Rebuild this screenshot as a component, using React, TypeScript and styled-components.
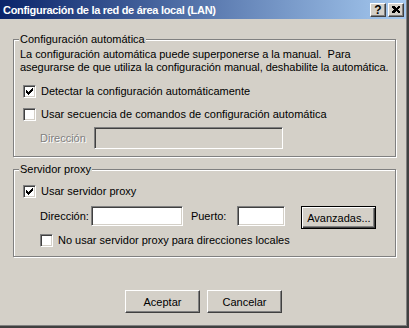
import React from 'react';
import styled, { createGlobalStyle } from 'styled-components';

const Global = createGlobalStyle`
  html, body {
    margin: 0;
    padding: 0;
    background: #d4d0c8;
  }
  body {
    font-family: 'Liberation Sans', Arial, sans-serif;
    font-size: 11px;
    color: #000;
  }
`;

const Window = styled.div`
  width: 409px;
  height: 328px;
  box-sizing: border-box;
  padding: 0 3px 3px 0;
  background: #d4d0c8;
  display: flex;
  flex-direction: column;
  box-shadow: inset -1px -1px #404040, inset -2px -2px #404040, inset -3px -3px #808080;
`;

const TitleBar = styled.div`
  height: 19px;
  flex: none;
  display: flex;
  align-items: center;
  padding: 0 2px 0 3px;
  background: linear-gradient(to right, #0a246a, #a6caf0);
  color: #fff;
  font-weight: bold;
  font-size: 11px;
`;

const Title = styled.span`
  flex: 1;
  white-space: nowrap;
  letter-spacing: -0.3px;
`;

const TitleButtons = styled.div`
  display: flex;
  gap: 2px;
`;

const CaptionButton = styled.span`
  width: 16px;
  height: 14px;
  box-sizing: border-box;
  background: #d4d0c8;
  color: #000;
  border: 1px solid;
  border-color: #fff #404040 #404040 #fff;
  box-shadow: inset -1px -1px #808080;
  display: flex;
  align-items: center;
  justify-content: center;
  font-size: 12px;
  font-weight: bold;
  line-height: 1;
`;

const Group = styled.fieldset<{ $top: number; $bottom: number }>`
  margin: ${p => p.$top}px 0 0 13px;
  width: 383px;
  box-sizing: border-box;
  border: 1px solid #808080;
  box-shadow: inset 1px 1px #fff, 1px 1px #fff;
  padding: 0 0 ${p => p.$bottom}px 5px;
  min-inline-size: 0;
  display: flex;
  flex-direction: column;
`;

const Legend = styled.legend`
  padding: 0 1px;
  line-height: 13px;
  background: #d4d0c8;
`;

const Note = styled.p`
  margin: 2px 0 0 1px;
  line-height: 13px;
  letter-spacing: -0.05px;
`;

const CheckRow = styled.label<{ $top: number; $indent?: number }>`
  display: flex;
  align-items: center;
  gap: 5px;
  height: 13px;
  line-height: 13px;
  margin: ${p => p.$top}px 0 0 ${p => p.$indent ?? 4}px;
`;

const Box = styled.span`
  width: 13px;
  height: 13px;
  box-sizing: border-box;
  flex: none;
  background: #fff;
  border: 1px solid;
  border-color: #808080 #fff #fff #808080;
  box-shadow: inset 1px 1px #404040, inset -1px -1px #d4d0c8;
  display: flex;
  align-items: center;
  justify-content: center;
`;

const FieldRow = styled.div<{ $top: number }>`
  display: flex;
  align-items: center;
  margin: ${p => p.$top}px 0 0 21px;
`;

const FieldLabel = styled.span<{ $disabled?: boolean; $gap: number }>`
  margin-right: ${p => p.$gap}px;
  line-height: 13px;
  color: ${p => (p.$disabled ? '#808080' : '#000')};
  text-shadow: ${p => (p.$disabled ? '1px 1px #fff' : 'none')};
`;

const Field = styled.input<{ $w: number; $h: number }>`
  width: ${p => p.$w}px;
  height: ${p => p.$h}px;
  box-sizing: border-box;
  margin: 0;
  padding: 0 3px;
  border: 1px solid;
  border-color: #808080 #fff #fff #808080;
  box-shadow: inset 1px 1px #404040, inset -1px -1px #d4d0c8;
  background: #fff;
  font: inherit;
  outline: none;

  &:disabled {
    background: #d4d0c8;
  }
`;

const ProxyRow = styled.div`
  display: flex;
  align-items: flex-start;
  margin: 8px 0 0 21px;
`;

const ProxyLabel = styled.span<{ $gap: number; $lead?: number }>`
  height: 20px;
  display: flex;
  align-items: center;
  margin: 0 ${p => p.$gap}px 0 ${p => p.$lead ?? 0}px;
`;

const Button = styled.button<{ $default?: boolean }>`
  width: 75px;
  height: 23px;
  box-sizing: border-box;
  margin: 0;
  padding: 0;
  background: #d4d0c8;
  color: #000;
  font: inherit;
  border: 1px solid;
  border-color: ${p => (p.$default ? '#000' : '#fff #404040 #404040 #fff')};
  box-shadow: ${p =>
    p.$default
      ? 'inset 1px 1px #fff, inset -1px -1px #404040, inset -2px -2px #808080'
      : 'inset -1px -1px #808080'};
  outline: none;
`;

const Footer = styled.div`
  display: flex;
  justify-content: center;
  gap: 7px;
  margin: 33px 0 0 1px;
`;

const checkPixels: [number, number, number][] = [
  [6, 0, 1],
  [5, 1, 2],
  [0, 2, 1],
  [4, 2, 3],
  [0, 3, 2],
  [3, 3, 3],
  [0, 4, 5],
  [1, 5, 3],
  [2, 6, 1],
];

function Check({ checked }: { checked?: boolean }) {
  return (
    <Box>
      {checked && (
        <svg width="7" height="7" viewBox="0 0 7 7" shapeRendering="crispEdges">
          {checkPixels.map(([x, y, w], i) => (
            <rect key={i} x={x} y={y} width={w} height={1} fill="#000" />
          ))}
        </svg>
      )}
    </Box>
  );
}

function CloseGlyph() {
  return (
    <svg width="8" height="7" viewBox="0 0 8 7" shapeRendering="crispEdges">
      <path d="M0 0h2l2 2 2-2h2v1l-2 2.5 2 2.5v1h-2l-2-2-2 2h-2v-1l2-2.5-2-2.5z" fill="#000" />
    </svg>
  );
}

export default function App() {
  return (
    <Window>
      <Global />
      <TitleBar>
        <Title>Configuración de la red de área local (LAN)</Title>
        <TitleButtons>
          <CaptionButton>?</CaptionButton>
          <CaptionButton>
            <CloseGlyph />
          </CaptionButton>
        </TitleButtons>
      </TitleBar>

      <Group $top={14} $bottom={7}>
        <Legend>Configuración automática</Legend>
        <Note>
          La configuración automática puede superponerse a la manual.&nbsp; Para
          <br />
          asegurarse de que utiliza la configuración manual, deshabilite la automática.
        </Note>
        <CheckRow $top={11}>
          <Check checked />
          Detectar la configuración automáticamente
        </CheckRow>
        <CheckRow $top={10}>
          <Check />
          Usar secuencia de comandos de configuración automática
        </CheckRow>
        <FieldRow $top={6}>
          <FieldLabel $disabled $gap={8}>Dirección</FieldLabel>
          <Field $w={189} $h={22} disabled />
        </FieldRow>
      </Group>

      <Group $top={6} $bottom={9}>
        <Legend>Servidor proxy</Legend>
        <CheckRow $top={9}>
          <Check checked />
          Usar servidor proxy
        </CheckRow>
        <ProxyRow>
          <ProxyLabel $gap={2}>Dirección:</ProxyLabel>
          <Field $w={92} $h={20} />
          <ProxyLabel $gap={11} $lead={8}>Puerto:</ProxyLabel>
          <Field $w={48} $h={20} />
          <ProxyLabel $gap={0} $lead={16} />
          <Button $default>Avanzadas...</Button>
        </ProxyRow>
        <CheckRow $top={5} $indent={21}>
          <Check />
          No usar servidor proxy para direcciones locales
        </CheckRow>
      </Group>

      <Footer>
        <Button>Aceptar</Button>
        <Button>Cancelar</Button>
      </Footer>
    </Window>
  );
}
